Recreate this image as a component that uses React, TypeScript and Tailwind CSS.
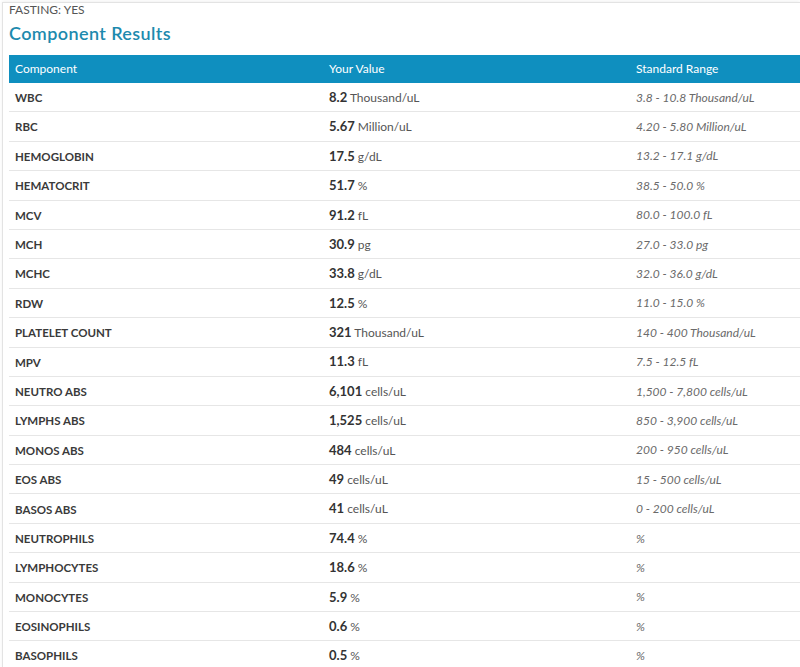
import React from "react";

type Row = { name: string; value: string; unit: string; range: string };

const rows: Row[] = [
  { name: "WBC", value: "8.2", unit: "Thousand/uL", range: "3.8 - 10.8 Thousand/uL" },
  { name: "RBC", value: "5.67", unit: "Million/uL", range: "4.20 - 5.80 Million/uL" },
  { name: "HEMOGLOBIN", value: "17.5", unit: "g/dL", range: "13.2 - 17.1 g/dL" },
  { name: "HEMATOCRIT", value: "51.7", unit: "%", range: "38.5 - 50.0 %" },
  { name: "MCV", value: "91.2", unit: "fL", range: "80.0 - 100.0 fL" },
  { name: "MCH", value: "30.9", unit: "pg", range: "27.0 - 33.0 pg" },
  { name: "MCHC", value: "33.8", unit: "g/dL", range: "32.0 - 36.0 g/dL" },
  { name: "RDW", value: "12.5", unit: "%", range: "11.0 - 15.0 %" },
  { name: "PLATELET COUNT", value: "321", unit: "Thousand/uL", range: "140 - 400 Thousand/uL" },
  { name: "MPV", value: "11.3", unit: "fL", range: "7.5 - 12.5 fL" },
  { name: "NEUTRO ABS", value: "6,101", unit: "cells/uL", range: "1,500 - 7,800 cells/uL" },
  { name: "LYMPHS ABS", value: "1,525", unit: "cells/uL", range: "850 - 3,900 cells/uL" },
  { name: "MONOS ABS", value: "484", unit: "cells/uL", range: "200 - 950 cells/uL" },
  { name: "EOS ABS", value: "49", unit: "cells/uL", range: "15 - 500 cells/uL" },
  { name: "BASOS ABS", value: "41", unit: "cells/uL", range: "0 - 200 cells/uL" },
  { name: "NEUTROPHILS", value: "74.4", unit: "%", range: "%" },
  { name: "LYMPHOCYTES", value: "18.6", unit: "%", range: "%" },
  { name: "MONOCYTES", value: "5.9", unit: "%", range: "%" },
  { name: "EOSINOPHILS", value: "0.6", unit: "%", range: "%" },
  { name: "BASOPHILS", value: "0.5", unit: "%", range: "%" },
];

export default function App() {
  return (
    <div className="w-[800px] h-[667px] overflow-hidden bg-white font-['Lato','Liberation_Sans',sans-serif]">
      <div className="ml-[2px] mt-[2px] border-l border-t border-[#e3e3e3] shadow-[0_-1px_3px_rgba(0,0,0,0.06)] pl-[6px] h-full">
        <div className="text-[12px] leading-[13px] text-[#555]">FASTING: YES</div>
        <h2 className="mt-[6px] text-[18px] leading-[22px] font-semibold tracking-[0.4px] text-[#1d8aae]">
          Component Results
        </h2>
        <div className="mt-[11px] w-[1000px]">
          <div className="flex h-[28px] items-center bg-[#0f8fbf] text-[12px] text-white">
            <div className="w-[314px] pl-[6px]">Component</div>
            <div className="w-[307px] pl-[6px]">Your Value</div>
            <div className="flex-1 pl-[6px]">Standard Range</div>
          </div>
          {rows.map((r) => (
            <div
              key={r.name}
              className="flex h-[29.4px] items-center border-b border-[#e6e6e6] pt-[1px] text-[12px] text-[#3a3a3a]"
            >
              <div className="w-[314px] pl-[6px] text-[11.5px] font-bold text-[#3a3a3a]">{r.name}</div>
              <div className="w-[307px] pl-[6px]">
                <span className="font-bold text-[13px] text-[#333]">{r.value}</span>{" "}
                <span className="text-[#555]">{r.unit}</span>
              </div>
              <div className="flex-1 pl-[6px] italic text-[#6a6a6a]">{r.range}</div>
            </div>
          ))}
        </div>
      </div>
    </div>
  );
}
